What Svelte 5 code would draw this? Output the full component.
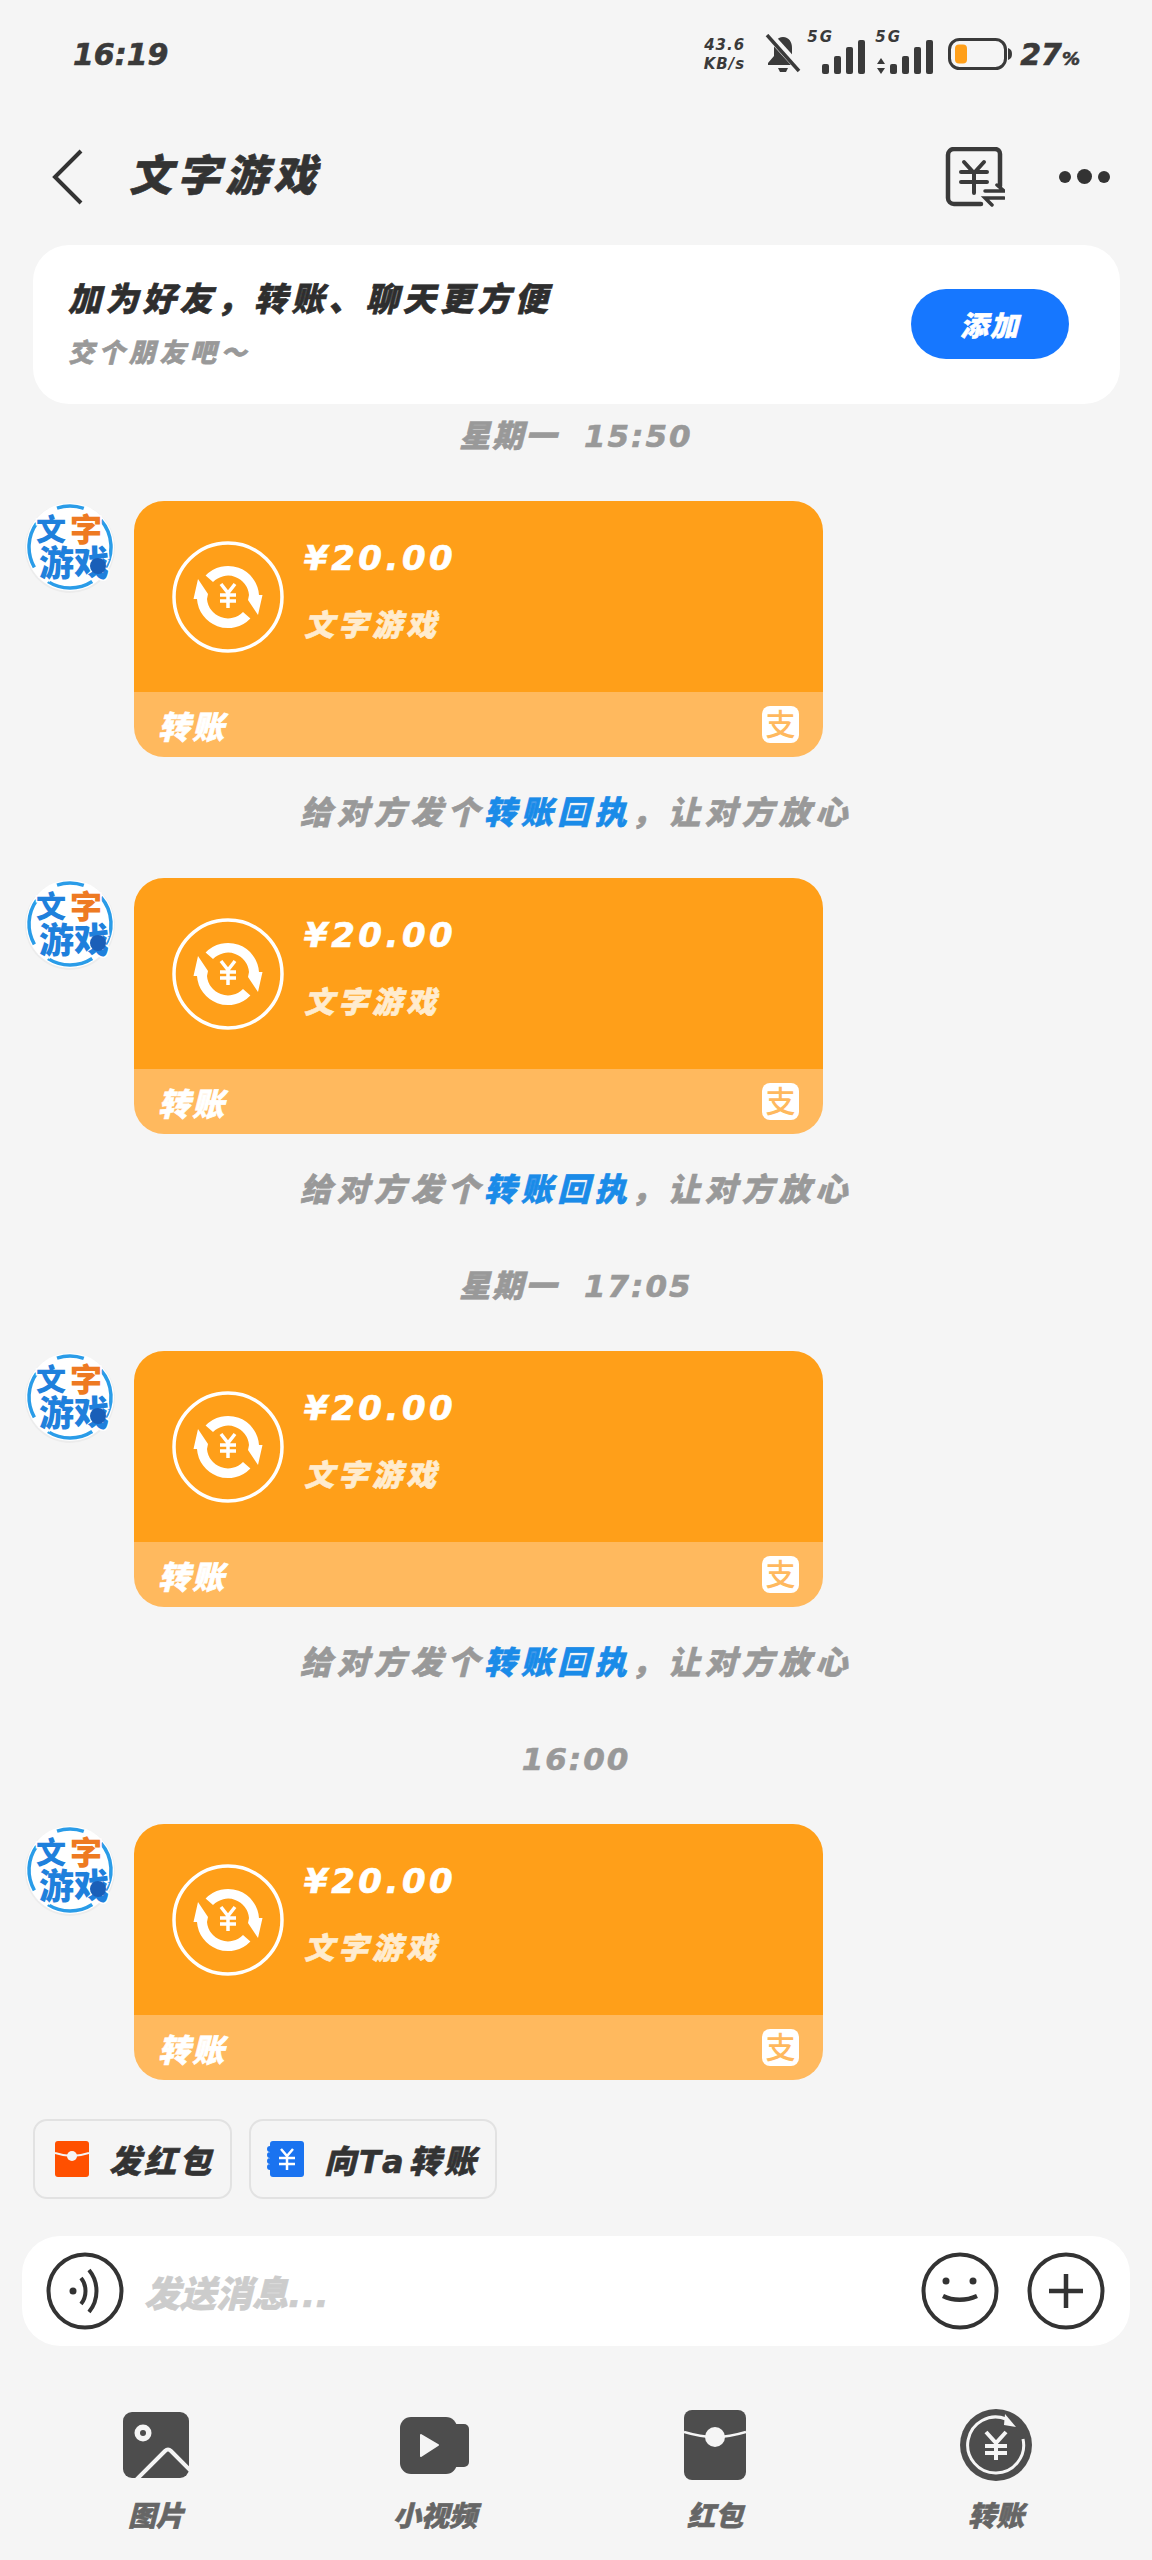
<script>
	// stamp: optional time divider above the bubble, notice: receipt hint below it
	const messages = [
		{ stamp: '星期一  15:50', notice: true },
		{ stamp: null, notice: true },
		{ stamp: '星期一  17:05', notice: true },
		{ stamp: '16:00', notice: false }
	];
	const barHeights = [10, 18, 27, 34];
	const coinArrow = 'M-15-15L-22.400-21.400A31 31 0 0 1 31-2L34.500-2L30 18L20 3L21-2A21 21 0 0 0-15-15z';
</script>

<div class="page">
	<div class="status">
		<span class="clock">16:19</span>
		<div class="status-right">
			<div class="net"><span>43.6</span><span>KB/s</span></div>
			<svg class="bell" width="36" height="40" viewBox="0 0 36 40">
				<path d="M18 3c-6 0-9 5-9 11v8l-6 7v2h30v-2l-6-7v-8c0-6-3-11-9-11z" fill="#3a3a3a" />
				<path d="M13 34h10l-2 4h-6z" fill="#3a3a3a" />
				<path d="M5 2l29 32" stroke="#f5f5f5" stroke-width="8" />
				<path d="M2 1l32 36" stroke="#3a3a3a" stroke-width="3.500" />
			</svg>
			<div class="signal">
				<span class="five-g">5G</span>
				<div class="bars">
					{#each barHeights as h}<i style="height:{h}px"></i>{/each}
				</div>
			</div>
			<div class="signal">
				<span class="five-g">5G</span>
				<div class="bars">
					<svg class="updown" width="8" height="16" viewBox="0 0 8 16"><path d="M4 0l4 6H0zM4 16l-4-6h8z" fill="#3a3a3a" /></svg>
					{#each barHeights as h}<i style="height:{h}px"></i>{/each}
				</div>
			</div>
			<svg class="battery" width="64" height="32" viewBox="0 0 64 32">
				<rect x="1.500" y="1.500" width="56" height="29" rx="10" fill="none" stroke="#3a3a3a" stroke-width="3" />
				<rect x="7" y="6.500" width="12" height="19" rx="4" fill="#ff9f19" />
				<path d="M60 10c3 1 4 3 4 6s-1 5-4 6z" fill="#3a3a3a" />
			</svg>
			<span class="pct">27<small>%</small></span>
		</div>
	</div>

	<div class="nav">
		<svg class="back" width="36" height="58" viewBox="0 0 36 58">
			<path d="M32 3L6 29l26 26" fill="none" stroke="#333" stroke-width="4" />
		</svg>
		<h1>文字游戏</h1>
		<svg class="bill" width="60" height="60" viewBox="0 0 60 60">
			<path d="M36 57H9a6 6 0 0 1-6-6V8a6 6 0 0 1 6-6h41a5 5 0 0 1 5 5v32" fill="none" stroke="#3a3a3a" stroke-width="4.500" stroke-linecap="round" />
			<path d="M19 15l10 11 10-11M16 25h26M16 35h26M29 26v20" fill="none" stroke="#3a3a3a" stroke-width="4" stroke-linecap="round" />
			<path d="M40 44h19l-7-6M59 51H40l7 7" fill="none" stroke="#3a3a3a" stroke-width="3.500" stroke-linecap="round" />
		</svg>
		<div class="dots"><i></i><i class="big"></i><i></i></div>
	</div>

	<div class="friend-card">
		<div class="friend-text">
			<div class="friend-title">加为好友，转账、聊天更方便</div>
			<div class="friend-sub">交个朋友吧～</div>
		</div>
		<button class="add">添加</button>
	</div>

	<div class="messages">
		{#each messages as m}
			{#if m.stamp}
				<div class="stamp">{m.stamp}</div>
			{/if}
			<div class="row">
				<svg class="avatar" width="92" height="92" viewBox="0 0 92 92">
					<circle cx="46" cy="47" r="45" fill="#ececec" />
					<circle cx="46" cy="46" r="44" fill="#fff" />
					<circle cx="46" cy="46" r="41" fill="none" stroke="#2a9ce8" stroke-width="3.500" stroke-dasharray="53.700 16.500 46.500 20 46.500 25.800 27.200 21.500" transform="rotate(-41 46 46)" />
					<text x="12" y="39" class="av-text" font-size="30" fill="#1f80dc">文</text>
					<text x="46" y="40" class="av-text" font-size="32" fill="#ee7a22">字</text>
					<text x="15" y="75" class="av-text" font-size="35" fill="#1f80dc">游戏</text>
					<circle cx="74" cy="65" r="8" fill="#1a5fb8" />
				</svg>
				<div class="bubble">
					<div class="bubble-main">
						<svg class="coin" width="112" height="112" viewBox="-56 -56 112 112">
							<circle r="54" fill="none" stroke="#fff" stroke-width="3.500" />
							<path d={coinArrow} fill="#fff" />
							<path d={coinArrow} fill="#fff" transform="rotate(180)" />
							<path d="M-7-13L0-4L7-13M-8-2H8M-8 4H8M0-4V11" fill="none" stroke="#fff" stroke-width="3.500" />
						</svg>
						<div class="amount-box">
							<div class="amount">¥20.00</div>
							<div class="payer">文字游戏</div>
						</div>
					</div>
					<div class="bubble-foot">
						<span>转账</span>
						<span class="alipay">支</span>
					</div>
				</div>
			</div>
			{#if m.notice}
				<div class="notice">给对方发个<b>转账回执</b>，让对方放心</div>
			{/if}
		{/each}
	</div>

	<div class="chips">
		<div class="chip">
			<svg width="34" height="36" viewBox="0 0 34 36">
				<rect width="34" height="36" rx="3" fill="#ff5000" />
				<path d="M0 12c6 2 11 3 17 3s11-1 17-3" fill="none" stroke="#f5f5f5" stroke-width="2" />
				<circle cx="17" cy="15" r="5" fill="#f5f5f5" />
			</svg>
			<span>发红包</span>
		</div>
		<div class="chip">
			<svg width="37" height="36" viewBox="0 0 37 36">
				<rect x="3" width="34" height="36" rx="3" fill="#1a73f0" />
				<path d="M3 5a3 3 0 0 0 0 6a3 3 0 0 0 0 6a3 3 0 0 0 0 6a3 3 0 0 0 0 6z" fill="#1a73f0" />
				<path d="M14 8l6 7 6-7M12 17h16M12 23h16M20 15v14" fill="none" stroke="#fff" stroke-width="2.500" />
			</svg>
			<span>向<span class="latin">Ta</span>转账</span>
		</div>
	</div>

	<div class="input-bar">
		<svg width="78" height="78" viewBox="0 0 78 78">
			<circle cx="39" cy="39" r="36.500" fill="none" stroke="#333" stroke-width="4" />
			<circle cx="27" cy="39" r="3.500" fill="#333" />
			<path d="M35 26c6 7 6 19 0 26M43 18c10 12 10 30 0 42" fill="none" stroke="#333" stroke-width="4" />
		</svg>
		<span class="placeholder">发送消息...</span>
		<svg width="78" height="78" viewBox="0 0 78 78">
			<circle cx="39" cy="39" r="36.500" fill="none" stroke="#333" stroke-width="4" />
			<circle cx="25" cy="29" r="3.500" fill="#333" />
			<circle cx="52" cy="29" r="3.500" fill="#333" />
			<path d="M22 44c10 5 23 5 34 0" fill="none" stroke="#333" stroke-width="4.500" />
		</svg>
		<svg class="plus" width="78" height="78" viewBox="0 0 78 78">
			<circle cx="39" cy="39" r="36.500" fill="none" stroke="#333" stroke-width="4" />
			<path d="M22 39h34M39 22v34" fill="none" stroke="#333" stroke-width="4.500" />
		</svg>
	</div>

	<div class="tools">
		<div class="tool">
			<div class="slot">
				<svg width="66" height="66" viewBox="0 0 66 66">
					<rect width="66" height="66" rx="9" fill="#4d4d4d" />
					<circle cx="20" cy="21" r="8.500" fill="#f5f5f5" />
					<circle cx="20" cy="21" r="3" fill="#4d4d4d" />
					<path d="M13 68L42 39Q45 36 48 39L67 58" fill="none" stroke="#f5f5f5" stroke-width="4" />
				</svg>
			</div>
			<span>图片</span>
		</div>
		<div class="tool">
			<div class="slot">
				<svg width="70" height="58" viewBox="0 0 70 58">
					<rect y="1" width="57" height="57" rx="11" fill="#4d4d4d" />
					<rect x="50" y="8" width="19" height="43" rx="5" fill="#4d4d4d" />
					<path d="M21 19L38 29L21 40z" fill="#f5f5f5" stroke="#f5f5f5" stroke-width="2" stroke-linejoin="round" />
				</svg>
			</div>
			<span>小视频</span>
		</div>
		<div class="tool">
			<div class="slot">
				<svg width="62" height="70" viewBox="0 0 62 70">
					<rect width="62" height="70" rx="8" fill="#4d4d4d" />
					<path d="M0 22c10 3 20 5 31 5s21-2 31-5" fill="none" stroke="#f5f5f5" stroke-width="2.500" />
					<circle cx="31" cy="27" r="10" fill="#f5f5f5" />
				</svg>
			</div>
			<span>红包</span>
		</div>
		<div class="tool">
			<div class="slot">
				<svg width="74" height="74" viewBox="-37 -37 74 74">
					<circle r="36" fill="#4d4d4d" />
					<path d="M27-6A28 28 0 1 1 10-26" fill="none" stroke="#f5f5f5" stroke-width="3" />
					<path d="M9-31L20-18L8-20z" fill="#f5f5f5" />
					<path d="M-10-13L0-2L10-13M-11 1H11M-11 8H11M0-2V15" fill="none" stroke="#f5f5f5" stroke-width="4" />
				</svg>
			</div>
			<span>转账</span>
		</div>
	</div>
</div>

<style>
	:global(body) {
		margin: 0;
		background: #f5f5f5;
	}

	.page {
		width: 1152px;
		height: 2560px;
		overflow: hidden;
		background: #f5f5f5;
		color: #333;
		font-family: 'DejaVu Sans', 'Noto Sans CJK SC', sans-serif;
		font-weight: 900;
		font-style: italic;
		-webkit-text-stroke: 0.6px currentColor;
	}

	.status {
		height: 108px;
		display: flex;
		align-items: center;
		justify-content: space-between;
		padding: 0 72px 0 73px;
		box-sizing: border-box;
		color: #3a3a3a;
	}

	.clock {
		font-size: 30px;
	}

	.status-right {
		display: flex;
		align-items: center;
	}

	.net {
		display: flex;
		flex-direction: column;
		align-items: flex-end;
		gap: 5px;
		width: 46px;
		font-size: 15px;
		line-height: 14px;
		letter-spacing: 1px;
		-webkit-text-stroke: 0;
	}

	.bell {
		margin-left: 20px;
	}

	.signal {
		position: relative;
		width: 58px;
		height: 40px;
		margin-left: 6px;
	}

	.signal + .signal {
		margin-left: 10px;
	}

	.five-g {
		position: absolute;
		left: 0;
		top: -4px;
		font-size: 15px;
		line-height: 14px;
		letter-spacing: 2px;
		-webkit-text-stroke: 0;
	}

	.bars {
		position: absolute;
		right: 0;
		bottom: 0;
		display: flex;
		align-items: flex-end;
		gap: 5px;
	}

	.bars i {
		display: block;
		width: 7px;
		border-radius: 2px;
		background: #3a3a3a;
	}

	.battery {
		margin-left: 15px;
	}

	.pct {
		margin-left: 8px;
		font-size: 30px;
	}

	.pct small {
		font-size: 18px;
	}

	.nav {
		height: 137px;
		display: flex;
		align-items: center;
		padding: 0 42px 0 49px;
		box-sizing: border-box;
	}

	.nav h1 {
		margin: 0 0 10px 44px;
		flex: 1;
		font-size: 43px;
		font-weight: 900;
		letter-spacing: 5px;
	}

	.dots {
		display: flex;
		align-items: center;
		gap: 6px;
		margin-left: 54px;
	}

	.dots i {
		width: 12px;
		height: 12px;
		border-radius: 50%;
		background: #333;
	}

	.dots i.big {
		width: 15px;
		height: 15px;
	}

	.friend-card {
		height: 159px;
		margin: 0 32px 0 33px;
		padding: 0 51px 0 35px;
		display: flex;
		align-items: center;
		justify-content: space-between;
		background: #fff;
		border-radius: 36px;
	}

	.friend-title {
		font-size: 33px;
		line-height: 44px;
		letter-spacing: 4.200px;
		color: #2e2e2e;
	}

	.friend-sub {
		margin-top: 13px;
		font-size: 26px;
		line-height: 36px;
		letter-spacing: 4.500px;
		color: #999;
	}

	.add {
		width: 158px;
		height: 70px;
		margin-bottom: 2px;
		border: none;
		border-radius: 35px;
		background: #1677ff;
		color: #fff;
		font: inherit;
		font-size: 28px;
		letter-spacing: 2px;
	}

	.messages {
		display: flex;
		flex-direction: column;
	}

	.stamp {
		height: 40px;
		margin-top: 56px;
		text-align: center;
		font-size: 31px;
		line-height: 40px;
		letter-spacing: 2px;
		white-space: pre;
		color: #999;
	}

	.stamp:first-child {
		margin-top: 12px;
	}

	.row {
		display: flex;
		margin-top: 45px;
		padding-left: 24px;
	}

	.av-text {
		font-family: 'Noto Sans CJK SC', sans-serif;
		font-weight: 900;
		font-style: normal;
		stroke: #fff;
		stroke-width: 3px;
		paint-order: stroke;
		-webkit-text-stroke: 0;
	}

	.bubble {
		width: 689px;
		height: 256px;
		margin-left: 18px;
		border-radius: 30px;
		overflow: hidden;
		display: flex;
		flex-direction: column;
		color: #fff;
	}

	.bubble-main {
		flex: 1;
		display: flex;
		align-items: center;
		padding-left: 38px;
		background: #ff9f19;
	}

	.coin {
		flex: none;
	}

	.amount-box {
		margin: 0 0 10px 20px;
	}

	.amount {
		font-size: 34px;
		line-height: 44px;
		letter-spacing: 3.500px;
	}

	.payer {
		margin-top: 25px;
		font-size: 30px;
		line-height: 42px;
		letter-spacing: 4px;
		color: #ffeccf;
	}

	.bubble-foot {
		height: 65px;
		display: flex;
		align-items: center;
		justify-content: space-between;
		padding: 0 24px;
		background: #ffb95e;
		font-size: 32px;
		letter-spacing: 2px;
	}

	.alipay {
		width: 37px;
		height: 37px;
		border-radius: 8px;
		background: #fff;
		color: #ffb95e;
		font-size: 30px;
		font-weight: 500;
		font-style: normal;
		line-height: 37px;
		text-align: center;
		letter-spacing: 0;
		-webkit-text-stroke: 0;
	}

	.notice {
		height: 40px;
		margin-top: 36px;
		text-align: center;
		font-size: 32px;
		line-height: 40px;
		letter-spacing: 4.800px;
		color: #999;
	}

	.notice b {
		color: #1a8be8;
	}

	.chips {
		display: flex;
		gap: 17px;
		margin: 39px 0 0 33px;
	}

	.chip {
		height: 80px;
		display: flex;
		align-items: center;
		gap: 20px;
		padding: 0 16px;
		box-sizing: border-box;
		border: 2px solid #e2e2e2;
		border-radius: 14px;
		font-size: 32px;
		letter-spacing: 3px;
		color: #333;
	}

	.chip:first-child {
		padding-left: 20px;
	}

	.chip .latin {
		letter-spacing: 5px;
	}

	.input-bar {
		height: 110px;
		margin: 37px 22px 0;
		padding: 0 25px 0 24px;
		display: flex;
		align-items: center;
		background: #fff;
		border-radius: 38px;
	}

	.placeholder {
		flex: 1;
		margin-left: 20px;
		font-size: 36px;
		color: #ccc;
	}

	.plus {
		margin-left: 28px;
	}

	.tools {
		display: grid;
		grid-template-columns: 312px 246px 314px 248px;
		margin-top: 62px;
	}

	.tool {
		display: flex;
		flex-direction: column;
		align-items: center;
		gap: 17px;
		font-size: 28px;
		line-height: 36px;
		color: #666;
	}

	.slot {
		height: 74px;
		display: flex;
		align-items: center;
	}

	.slot svg {
		display: block;
	}
</style>
